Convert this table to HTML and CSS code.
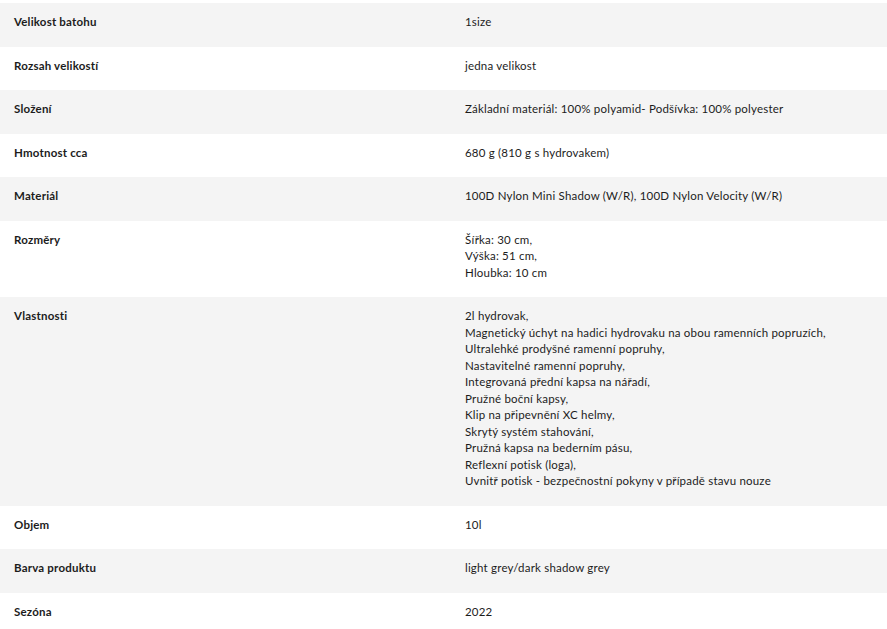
FILE: index.html
```html
<!DOCTYPE html>
<html lang="cs">
<head>
<meta charset="utf-8">
<title>Parametry</title>
<link rel="stylesheet" href="styles.css">
</head>
<body>
<div class="specs">
  <div class="row"><div class="label">Velikost batohu</div><div class="value">1size</div></div>
  <div class="row"><div class="label">Rozsah velikostí</div><div class="value">jedna velikost</div></div>
  <div class="row"><div class="label">Složení</div><div class="value">Základní materiál: 100% polyamid- Podšívka: 100% polyester</div></div>
  <div class="row"><div class="label">Hmotnost cca</div><div class="value">680 g (810 g s hydrovakem)</div></div>
  <div class="row"><div class="label">Materiál</div><div class="value">100D Nylon Mini Shadow (W/R), 100D Nylon Velocity (W/R)</div></div>
  <div class="row"><div class="label">Rozměry</div><div class="value">Šířka: 30 cm,<br>Výška: 51 cm,<br>Hloubka: 10 cm</div></div>
  <div class="row"><div class="label">Vlastnosti</div><div class="value">2l hydrovak,<br>Magnetický úchyt na hadici hydrovaku na obou ramenních popruzích,<br>Ultralehké prodyšné ramenní popruhy,<br>Nastavitelné ramenní popruhy,<br>Integrovaná přední kapsa na nářadí,<br>Pružné boční kapsy,<br>Klip na připevnění XC helmy,<br>Skrytý systém stahování,<br>Pružná kapsa na bederním pásu,<br>Reflexní potisk (loga),<br>Uvnitř potisk - bezpečnostní pokyny v případě stavu nouze</div></div>
  <div class="row"><div class="label">Objem</div><div class="value">10l</div></div>
  <div class="row"><div class="label">Barva produktu</div><div class="value">light grey/dark shadow grey</div></div>
  <div class="row"><div class="label">Sezóna</div><div class="value">2022</div></div>
</div>
</body>
</html>
```
FILE: styles.css
```css
html, body {
  margin: 0;
  padding: 0;
  background: #ffffff;
}
body {
  padding-top: 3px;
  font-family: Lato, "Noto Sans", sans-serif;
  font-size: 11.5px;
  letter-spacing: 0.2px;
  line-height: 16.5px;
  color: #1c1c1c;
}
.specs {
  display: flex;
  flex-direction: column;
}
.row {
  display: grid;
  grid-template-columns: 451px 1fr;
  padding: 11px 0 16px;
}
.row:nth-child(odd) {
  background: #f4f4f4;
}
.label {
  padding-left: 14px;
  font-weight: 700;
}
.value {
  padding-left: 14px;
}
```
